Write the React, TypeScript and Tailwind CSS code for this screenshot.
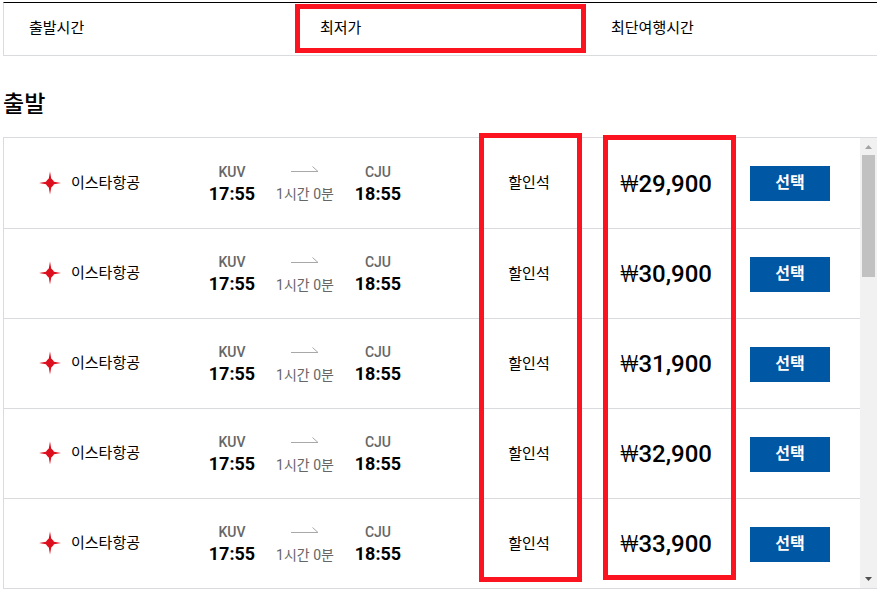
import { useState } from "react";

interface Flight {
  id: number;
  airline: string;
  from: string;
  departs: string;
  to: string;
  arrives: string;
  duration: string;
  seat: string;
  price: string;
}

const sortTabs = ["출발시간", "최저가", "최단여행시간"];

const flights: Flight[] = ["29,900", "30,900", "31,900", "32,900", "33,900"].map(
  (price, i) => ({
    id: i + 1,
    airline: "이스타항공",
    from: "KUV",
    departs: "17:55",
    to: "CJU",
    arrives: "18:55",
    duration: "1시간 0분",
    seat: "할인석",
    price,
  })
);

function AirlineLogo() {
  return (
    <svg width="22" height="24" viewBox="0 0 22 24" aria-hidden="true">
      <path
        d="M11 0.5 L12.2 7.6 Q14 9 15 10.7 L22 12 L15 13.3 Q14 15 12.2 16.4 L11 23.5 L9.8 16.4 Q8 15 7 13.3 L0 12 L7 10.7 Q8 9 9.8 7.6 Z"
        fill="#dc0f1e"
      />
    </svg>
  );
}

function RouteArrow() {
  return (
    <svg width="28" height="8" viewBox="0 0 28 8" aria-hidden="true">
      <path d="M0 5.5 H27 L21.5 0.5" fill="none" stroke="#a8a8a8" />
    </svg>
  );
}

function Stop({ code, time }: { code: string; time: string }) {
  return (
    <div className="w-12 text-center">
      <p className="text-[14px] leading-5 font-medium text-[#666]">{code}</p>
      <p className="text-[18px] leading-6 font-bold">{time}</p>
    </div>
  );
}

function FlightRow({ flight }: { flight: Flight }) {
  return (
    <li className="flex h-[90px] items-center border-b border-[#d9dbde] pt-px pr-[30px] pl-[35px] first:h-[91px] last:h-[89px] last:border-b-0">
      <div className="flex w-[169px] items-center gap-[10px] pb-[2px]">
        <AirlineLogo />
        <span className="text-[15px] leading-6">{flight.airline}</span>
      </div>
      <div className="flex items-center">
        <Stop code={flight.from} time={flight.departs} />
        <div className="flex w-[98px] flex-col items-center">
          <div className="flex h-5 items-center pb-[2px]">
            <RouteArrow />
          </div>
          <p className="pt-px text-[14px] leading-6 text-[#666]">{flight.duration}</p>
        </div>
        <Stop code={flight.to} time={flight.arrives} />
      </div>
      <span className="ml-auto w-[100px] text-center text-[15px]">{flight.seat}</span>
      <span className="w-[133px] text-right text-[24px] leading-8 font-medium">
        <span className="font-light">₩</span>
        {flight.price}
      </span>
      <button
        type="button"
        className="ml-[38px] h-[35px] w-20 bg-[#0057a3] pb-px text-[16px] font-bold text-white hover:bg-[#004a8c]"
      >
        선택
      </button>
    </li>
  );
}

function ScrollTrack() {
  return (
    <div className="flex w-[17px] flex-col items-center bg-[#f1f1f1]" aria-hidden="true">
      <svg width="17" height="17" viewBox="0 0 17 17">
        <path d="M5 11 L8.5 7 L12 11 Z" fill="#a3a3a3" />
      </svg>
      <div className="h-[122px] w-[13px] bg-[#c1c1c1]" />
      <svg className="mt-auto" width="17" height="17" viewBox="0 0 17 17">
        <path d="M5 6 L8.5 10 L12 6 Z" fill="#505050" />
      </svg>
    </div>
  );
}

export default function App() {
  const [sort, setSort] = useState("최저가");

  return (
    <main className="min-h-screen bg-white pt-[2px] pl-[3px] font-[Roboto,'Noto_Sans_CJK_KR',sans-serif] text-black">
      <div className="grid grid-cols-3 border-t border-b border-l border-t-black border-b-[#d9dbde] border-l-[#d9dbde]">
        {sortTabs.map((tab) => (
          <button
            key={tab}
            type="button"
            onClick={() => setSort(tab)}
            className={
              tab === sort
                ? "mt-px mb-[2px] h-[49px] border-[5px] border-[#fb1420] pl-5 text-left text-[15px]"
                : "mt-px mb-[2px] h-[49px] pl-[25px] text-left text-[15px]"
            }
          >
            {tab}
          </button>
        ))}
      </div>

      <h1 className="mt-[33px] mb-4 text-[23px] leading-8 font-medium">출발</h1>

      <section className="relative flex border-t border-b border-l border-[#d9dbde]">
        <ul className="min-w-0 flex-1">
          {flights.map((flight) => (
            <FlightRow key={flight.id} flight={flight} />
          ))}
        </ul>
        <ScrollTrack />

        {/* Highlight frames over the fare class and price columns */}
        <div className="pointer-events-none absolute -top-[5px] right-[295px] bottom-[6px] w-[103px] border-[5px] border-[#fb1420]" />
        <div className="pointer-events-none absolute -top-[3px] right-[141px] bottom-2 w-[133px] border-[5px] border-[#fb1420]" />
      </section>
    </main>
  );
}
